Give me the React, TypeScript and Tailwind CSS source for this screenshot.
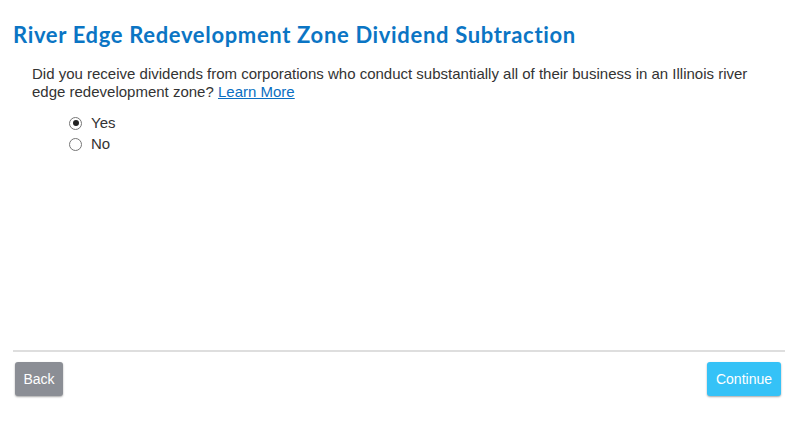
import React from "react";

function Radio({ checked, label }: { checked?: boolean; label: string }) {
  return (
    <label className="flex items-center gap-[9px] h-[18px]">
      <span className="w-[13px] h-[13px] rounded-full border border-[#767676] bg-white flex items-center justify-center">
        {checked && <span className="w-[6px] h-[6px] rounded-full bg-[#222]" />}
      </span>
      <span>{label}</span>
    </label>
  );
}

export default function App() {
  return (
    <div className="w-[801px] h-[432px] bg-white flex flex-col px-[13px] pt-[21px]">
      <h1 className="text-[22px] leading-[28px] font-bold tracking-[0.66px] text-[#0b75c4] font-['Lato',sans-serif]">
        River Edge Redevelopment Zone Dividend Subtraction
      </h1>
      <div className="pl-[19px] pt-[16px] font-['Liberation_Sans',Arial,sans-serif] text-[15px] leading-[18px] text-[#333]">
        <p className="max-w-[740px]">
          Did you receive dividends from corporations who conduct substantially all of their business in an Illinois river
          edge redevelopment zone?{" "}
          <a href="#" className="text-[#0a6fc2] underline">
            Learn More
          </a>
        </p>
        <div className="pl-[37px] pt-[13px] flex flex-col gap-[3px]">
          <Radio checked label="Yes" />
          <Radio label="No" />
        </div>
      </div>
      <div className="flex-1" />
      <div className="h-[2px] bg-[#dedede] mr-[3px]" />
      <div className="flex justify-between pt-[10px] pb-[36px] pl-[2px] pr-[7px] font-['Liberation_Sans',Arial,sans-serif] text-[14px]">
        <button className="h-[34px] w-[48px] rounded-[3px] bg-[#8b8e95] text-white shadow-[0_1px_2px_rgba(0,0,0,0.35)]">
          Back
        </button>
        <button className="h-[34px] w-[74px] rounded-[3px] bg-[#35c2f7] text-white shadow-[0_1px_2px_rgba(0,0,0,0.35)]">
          Continue
        </button>
      </div>
    </div>
  );
}
